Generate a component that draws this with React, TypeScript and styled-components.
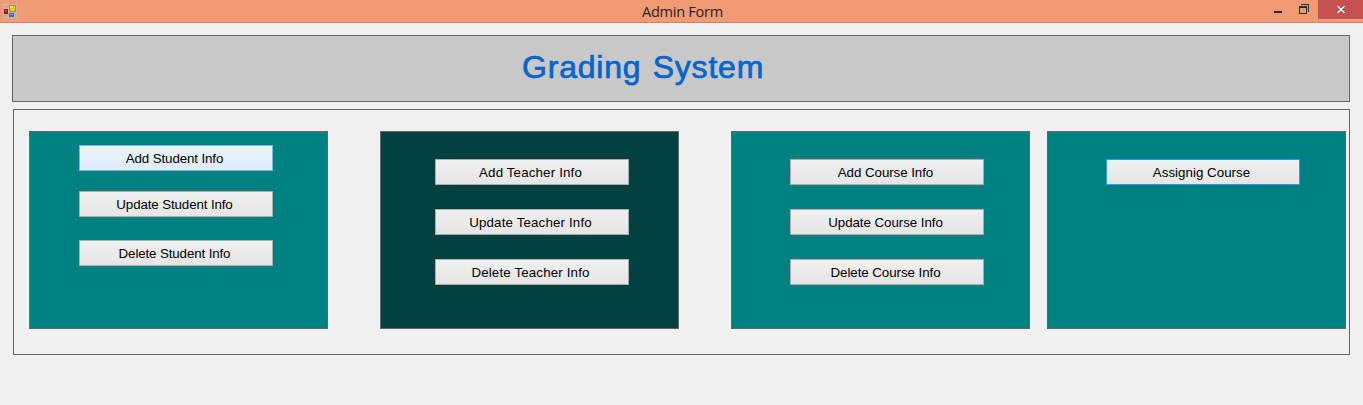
import React from 'react';
import styled, { createGlobalStyle } from 'styled-components';

const GlobalStyle = createGlobalStyle`
  * { box-sizing: border-box; }
  body { margin: 0; background: #f0f0f0; font-family: "Liberation Sans", Arial, sans-serif; overflow: hidden; }
`;

const Window = styled.div`
  display: flex;
  flex-direction: column;
  height: 405px;
  background: #f0f0f0;
`;

const TitleBar = styled.header`
  display: grid;
  grid-template-columns: 100px 1fr 100px;
  height: 23px;
  background: #f29a73;
  border-bottom: 1px solid #d08462;
`;

const AppIcon = styled.svg`
  display: block;
  margin: 4px 0 0 3px;
`;

const Caption = styled.div`
  font: 14.6px/22px "Open Sans", "Noto Sans", sans-serif;
  letter-spacing: -0.3px;
  text-align: center;
  color: #2b2320;
  padding-left: 2px;
`;

const Controls = styled.div`
  display: flex;
  justify-content: flex-end;
`;

const ControlButton = styled.button<{ $width: number; $close?: boolean }>`
  width: ${(p) => p.$width}px;
  height: 19px;
  padding: 0;
  border: 0;
  background: ${(p) => (p.$close ? '#c75050' : 'transparent')};
  svg { display: block; }
`;

const Banner = styled.div`
  margin: 12px 13px 0 12px;
  height: 67px;
  flex: none;
  border: 1px solid #646464;
  background: #c8c8c8;
  padding: 12px 0 0 509px;
`;

const Heading = styled.h1`
  margin: 0;
  font-size: 32px;
  line-height: 38px;
  font-weight: 400;
  letter-spacing: 0.8px;
  word-spacing: 1.5px;
  color: #0066cc;
  -webkit-text-stroke: 0.7px #0066cc;
  white-space: nowrap;
`;

const Content = styled.main`
  display: flex;
  flex: none;
  align-items: flex-start;
  margin: 7px 13px 0 13px;
  height: 246px;
  border: 1px solid #646464;
  padding: 21px 3px 0 15px;
`;

const Card = styled.section<{ $color: string; $before: number; $top: number; $left: number }>`
  flex: none;
  display: flex;
  flex-direction: column;
  align-items: flex-start;
  width: 299px;
  height: 198px;
  margin-left: ${(p) => p.$before}px;
  padding: ${(p) => p.$top}px 0 0 ${(p) => p.$left}px;
  border: 1px solid #646464;
  background: ${(p) => p.$color};
`;

const stateStyles = {
  normal: ['#acacac', '#f0f0f0', '#e5e5e5'],
  hover: ['#7eb4ea', '#ecf4fc', '#dcecfc'],
  focus: ['#3399ff', '#f0f0f0', '#e5e5e5'],
};
type ButtonState = keyof typeof stateStyles;

const ActionButton = styled.button<{ $state: ButtonState; $gap: number; $spacing: number }>`
  width: 194px;
  height: 26px;
  margin: 0 0 ${(p) => p.$gap}px;
  padding: 1px 3px 0 0;
  border: 1px solid ${(p) => stateStyles[p.$state][0]};
  background: linear-gradient(${(p) => stateStyles[p.$state][1]}, ${(p) => stateStyles[p.$state][2]});
  font: 13.33px/22px "Liberation Sans", Arial, sans-serif;
  letter-spacing: ${(p) => p.$spacing}px;
  color: #000;
  white-space: nowrap;
`;

interface Action { label: string; gap?: number; state?: ButtonState }
interface Panel { id: string; color: string; before: number; top: number; left: number; spacing: number; actions: Action[] }

const panels: Panel[] = [
  {
    id: 'student', color: '#008080', before: 0, top: 13, left: 49, spacing: -0.12,
    actions: [
      { label: 'Add Student Info', gap: 20, state: 'hover' },
      { label: 'Update Student Info', gap: 23 },
      { label: 'Delete Student Info' },
    ],
  },
  {
    id: 'teacher', color: '#004040', before: 52, top: 27, left: 54, spacing: 0.15,
    actions: [
      { label: 'Add Teacher Info', gap: 24 },
      { label: 'Update Teacher Info', gap: 24 },
      { label: 'Delete Teacher Info' },
    ],
  },
  {
    id: 'course', color: '#008080', before: 52, top: 27, left: 58, spacing: -0.06,
    actions: [
      { label: 'Add Course Info', gap: 24 },
      { label: 'Update Course Info', gap: 24 },
      { label: 'Delete Course Info' },
    ],
  },
  {
    id: 'assign', color: '#008080', before: 17, top: 27, left: 58, spacing: 0.02,
    actions: [{ label: 'Assignig Course', state: 'focus' }],
  },
];

function FormIcon() {
  return (
    <AppIcon width="14" height="14" viewBox="0 0 14 14" shapeRendering="crispEdges">
      <path d="M.5 .5h13v13H.5zM5.5 .5v13M.5 4.5h5M.5 10.5h5M5.5 8.5h8M11.5 8.5v5" fill="none" stroke="#c3b9b3" />
      <rect x="1" y="5" width="4" height="5" fill="#a31515" />
      <rect x="2" y="6" width="2" height="2" fill="#e03c30" />
      <rect x="6" y="1" width="7" height="7" fill="#b98a10" />
      <rect x="7" y="2" width="5" height="5" fill="#fcc21c" />
      <rect x="7" y="2" width="3" height="2" fill="#ffe070" />
      <rect x="6" y="9" width="5" height="4" fill="#3468cc" />
      <rect x="7" y="10" width="3" height="1" fill="#7aaaf8" />
    </AppIcon>
  );
}

export default function App() {
  return (
    <>
      <GlobalStyle />
      <Window>
        <TitleBar>
          <FormIcon />
          <Caption>Admin Form</Caption>
          <Controls>
            <ControlButton $width={26} aria-label="Minimize">
              <svg width="26" height="19" shapeRendering="crispEdges"><rect x="8" y="11" width="8" height="2" fill="#2b2b2b" /></svg>
            </ControlButton>
            <ControlButton $width={26} aria-label="Restore">
              <svg width="26" height="19" shapeRendering="crispEdges" fill="#2b2b2b">
                <path d="M7 6h8v8H7zM8 8v5h6V8z" fillRule="evenodd" />
                <path d="M9 4h8v8h-1V5H9z" />
              </svg>
            </ControlButton>
            <ControlButton $width={45} $close aria-label="Close">
              <svg width="45" height="19" shapeRendering="crispEdges" fill="#fff">
                <path d="M19 6h2v1h1v1h2V7h1V6h2v1h-1v1h-1v1h-1v1h1v1h1v1h1v1h-2v-1h-1v-1h-2v1h-1v1h-2v-1h1v-1h1v-1h1V9h-1V8h-1V7h-1z" />
              </svg>
            </ControlButton>
          </Controls>
        </TitleBar>
        <Banner>
          <Heading>Grading System</Heading>
        </Banner>
        <Content>
          {panels.map((panel) => (
            <Card key={panel.id} $color={panel.color} $before={panel.before} $top={panel.top} $left={panel.left}>
              {panel.actions.map((a) => (
                <ActionButton key={a.label} $state={a.state ?? 'normal'} $gap={a.gap ?? 0} $spacing={panel.spacing}>
                  {a.label}
                </ActionButton>
              ))}
            </Card>
          ))}
        </Content>
      </Window>
    </>
  );
}
